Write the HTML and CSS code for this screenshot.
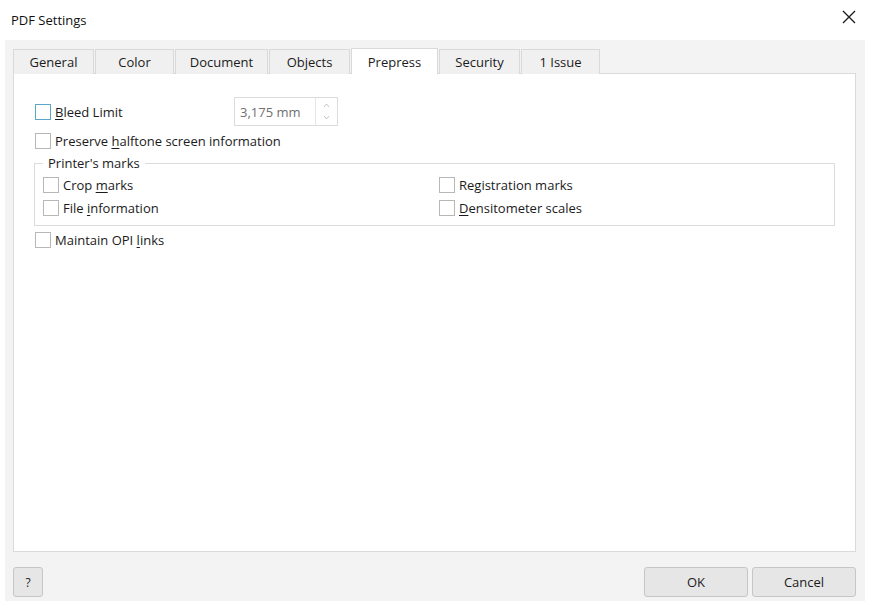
FILE: index.html
```html
<!DOCTYPE html>
<html lang="en">
<head>
<meta charset="utf-8">
<title>PDF Settings</title>
<link rel="stylesheet" href="styles.css">
</head>
<body>
<div class="window">
  <header class="titlebar">
    <span class="title">PDF Settings</span>
    <button class="close" aria-label="Close">
      <svg width="14" height="14" viewBox="0 0 14 14"><path d="M1 1 L13 13 M13 1 L1 13" stroke="#1f1f1f" stroke-width="1.4" fill="none"/></svg>
    </button>
  </header>

  <div class="client">
    <div class="tabs">
      <div class="tab tab-general">General</div>
      <div class="tab tab-color">Color</div>
      <div class="tab tab-document">Document</div>
      <div class="tab tab-objects">Objects</div>
      <div class="tab tab-prepress active">Prepress</div>
      <div class="tab tab-security">Security</div>
      <div class="tab tab-issue">1 Issue</div>
    </div>

    <div class="panel">
      <div class="row bleed-row">
        <label class="check"><span class="box focused"></span><span><u>B</u>leed Limit</span></label>
        <div class="spinbox">
          <span class="spin-value">3,175 mm</span>
          <span class="spin-buttons">
            <span class="spin-up"><svg width="5" height="3" viewBox="0 0 5 3"><path d="M0 3 L2.5 0 L5 3" fill="none" stroke="#b5b5b5" stroke-width="0.8"/></svg></span>
            <span class="spin-down"><svg width="5" height="3" viewBox="0 0 5 3"><path d="M0 0 L2.5 3 L5 0" fill="none" stroke="#b5b5b5" stroke-width="0.8"/></svg></span>
          </span>
        </div>
      </div>

      <label class="check row halftone-row"><span class="box"></span><span>Preserve <u>h</u>alftone screen information</span></label>

      <fieldset class="group">
        <legend>Printer's marks</legend>
        <div class="group-grid">
          <label class="check"><span class="box"></span><span>Crop <u>m</u>arks</span></label>
          <label class="check"><span class="box"></span><span>Re<u>g</u>istration marks</span></label>
          <label class="check"><span class="box"></span><span>File <u>i</u>nformation</span></label>
          <label class="check"><span class="box"></span><span><u>D</u>ensitometer scales</span></label>
        </div>
      </fieldset>

      <label class="check row opi-row"><span class="box"></span><span>Maintain OPI <u>l</u>inks</span></label>
    </div>

    <div class="footer">
      <button class="btn btn-help">?</button>
      <div class="footer-actions">
        <button class="btn btn-wide">OK</button>
        <button class="btn btn-wide">Cancel</button>
      </div>
    </div>
  </div>
</div>
</body>
</html>
```

FILE: styles.css
```css
* { box-sizing: border-box; }

html, body {
  margin: 0;
  padding: 0;
  background: #ffffff;
}

body {
  font-family: "Open Sans", "Noto Sans", sans-serif;
  font-size: 13px;
  color: #1b1b1b;
  width: 870px;
  height: 605px;
  overflow: hidden;
}

u { text-decoration: underline; text-underline-offset: 2px; text-decoration-thickness: 1px; }

/* window chrome */
.titlebar {
  height: 40px;
  display: flex;
  align-items: center;
  justify-content: space-between;
  padding: 0 14px 0 11px;
}
.title { font-size: 13px; color: #111; }
.close {
  border: 0;
  background: none;
  padding: 0;
  width: 14px;
  height: 14px;
  display: flex;
  margin-top: -6px;
}

/* dialog client area */
.client {
  margin: 0 5px;
  height: 561px;
  background: #f3f3f3;
  padding: 8px 9px 0 8px;
  display: flex;
  flex-direction: column;
}

/* tab strip */
.tabs {
  display: flex;
  height: 26px;
  position: relative;
  z-index: 1;
}
.tab {
  height: 25px;
  margin-top: 1px;
  margin-right: 1px;
  border: 1px solid #d9d9d9;
  border-bottom: 0;
  background: #f0f0f0;
  display: flex;
  align-items: center;
  justify-content: center;
  font-size: 13px;
  color: #1b1b1b;
}
.tab.active {
  background: #ffffff;
  height: 26px;
  margin-top: 0;
}
.tab-general { width: 81px; }
.tab-color { width: 79px; }
.tab-document { width: 93px; }
.tab-objects { width: 81px; }
.tab-prepress { width: 87px; }
.tab-security { width: 81px; }
.tab-issue { width: 79px; }

/* tab page */
.panel {
  margin-top: -1px;
  height: 479px;
  background: #ffffff;
  border: 1px solid #dadada;
  padding: 23px 20px 0 21px;
  display: flex;
  flex-direction: column;
}

.row { display: flex; align-items: center; }

.check {
  display: flex;
  align-items: center;
  gap: 4px;
  height: 23px;
  white-space: nowrap;
}
.box {
  width: 16px;
  height: 16px;
  border: 1px solid #b7b7b7;
  background: #fff;
  flex: none;
}
.box.focused { border-color: #5aa7c8; }

.bleed-row { height: 29px; }
.bleed-row .check { width: 199px; margin-top: 1px; }

.spinbox {
  width: 104px;
  height: 29px;
  border: 1px solid #dcdcdc;
  display: flex;
  align-items: center;
  justify-content: space-between;
  padding-left: 5px;
  color: #707070;
  font-size: 13px;
}
.spin-buttons {
  width: 22px;
  height: 27px;
  border-left: 1px solid #e6e6e6;
  display: flex;
  flex-direction: column;
  align-items: center;
  justify-content: center;
  gap: 9px;
}
.spin-up, .spin-down { display: flex; }

.halftone-row { margin-top: 3px; }

/* printer's marks group */
.group {
  margin: 2px 0 0 -1px;
  border: 1px solid #dcdcdc;
  padding: 1px 0 6px 8px;
  min-width: 0;
}
.group legend {
  padding: 0 5px;
  margin-left: 0;
  line-height: 18px;
}
.group-grid {
  display: grid;
  grid-template-columns: 396px 1fr;
}

.opi-row { margin-top: 2px; }

/* buttons */
.footer {
  display: flex;
  justify-content: space-between;
  margin-top: 15px;
}
.footer-actions { display: flex; gap: 4px; }
.btn {
  height: 30px;
  border: 1px solid #c6c6c6;
  border-radius: 3px;
  background: #e6e6e6;
  font-family: "Open Sans", "Noto Sans", sans-serif;
  font-size: 13px;
  color: #1b1b1b;
  padding: 0;
}
.btn-help { width: 30px; font-size: 12px; }
.btn-wide { width: 104px; }
```
